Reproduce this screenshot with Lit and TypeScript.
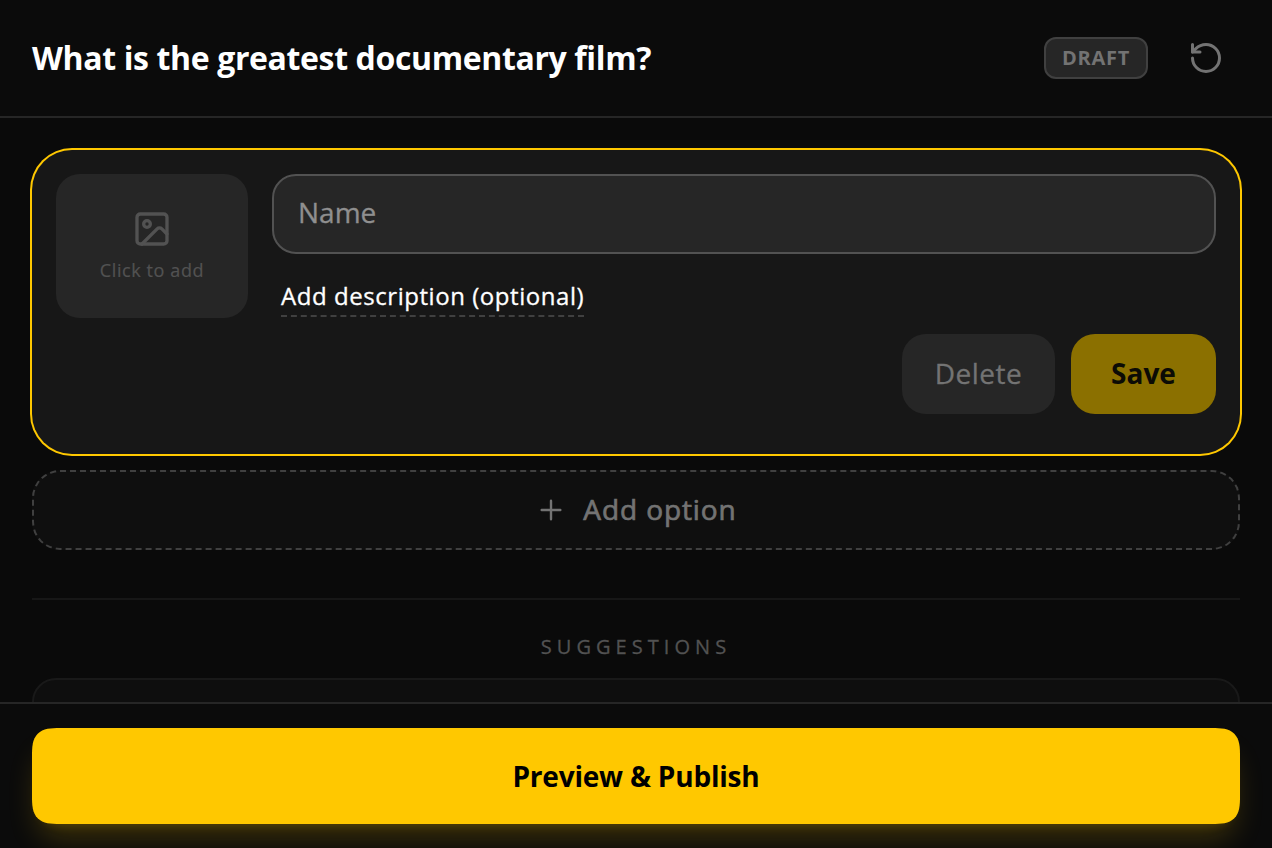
import { LitElement, html, css } from "lit";
import { customElement } from "lit/decorators.js";

@customElement("option-editor")
class OptionEditor extends LitElement {
  static styles = css`
    :host { display: block; }
    * { box-sizing: border-box; }
    .card {
      height: 304px;
      padding: 24px;
      border-radius: 40px;
      background: #171717;
      box-shadow: 0 0 0 2px #ffc800;
      display: flex;
      flex-direction: column;
      gap: 16px;
    }
    .row { display: flex; gap: 24px; height: 144px; }
    .thumb {
      width: 192px;
      height: 144px;
      border-radius: 24px;
      background: #262626;
      color: #525252;
      display: flex;
      flex-direction: column;
      align-items: center;
      padding-top: 35px;
      font-size: 18px;
      line-height: 24px;
    }
    .thumb svg { width: 40px; height: 40px; }
    .thumb span {
      margin-top: 9px;
      letter-spacing: 0.6px;
      white-space: nowrap;
      -webkit-text-stroke: 0.2px currentColor;
    }
    .fields { flex: 1; display: flex; flex-direction: column; align-items: flex-start; }
    .name {
      width: 100%;
      height: 80px;
      border: 2px solid #525252;
      border-radius: 24px;
      background: #262626;
      color: #fff;
      font: inherit;
      font-size: 28px;
      padding: 0 24px 4px;
      outline: none;
    }
    .name::placeholder {
      color: #8f8f8f;
      opacity: 1;
      -webkit-text-stroke: 0.3px currentColor;
    }
    .desc {
      margin: 26px 0 0 9px;
      padding-left: 0;
      height: 37px;
      line-height: 31px;
      font-size: 24px;
      letter-spacing: 0.55px;
      color: #fff;
      border-bottom: 2px dashed #404040;
      white-space: nowrap;
      -webkit-text-stroke: 0.3px currentColor;
    }
    .actions { display: flex; justify-content: flex-end; gap: 16px; }
    button {
      height: 80px;
      border: 0;
      border-radius: 24px;
      font: inherit;
      font-size: 28px;
      padding: 0 0 2px;
    }
    .delete {
      width: 153px;
      background: #262626;
      color: #737373;
      letter-spacing: 0.5px;
      -webkit-text-stroke: 0.3px currentColor;
    }
    .save { width: 145px; background: #8b7000; color: #0c0b05; font-weight: 700; }
  `;

  render() {
    return html`
      <div class="card">
        <div class="row">
          <div class="thumb">
            <svg viewBox="0 0 24 24" fill="none" stroke="currentColor" stroke-width="2" stroke-linecap="round" stroke-linejoin="round">
              <rect x="3" y="3" width="18" height="18" rx="2"></rect>
              <circle cx="9" cy="9" r="2"></circle>
              <path d="m21 15-3.086-3.086a2 2 0 0 0-2.828 0L6 21"></path>
            </svg>
            <span>Click to add</span>
          </div>
          <div class="fields">
            <input class="name" placeholder="Name" />
            <div class="desc">Add description (optional)</div>
          </div>
        </div>
        <div class="actions">
          <button class="delete">Delete</button>
          <button class="save">Save</button>
        </div>
      </div>
    `;
  }
}

@customElement("app-root")
class AppRoot extends LitElement {
  static styles = css`
    :host {
      display: flex;
      flex-direction: column;
      width: 100%;
      height: 848px;
      overflow: hidden;
      background: #0a0a0a;
      color: #fff;
      font-family: "Open Sans", "Noto Sans", sans-serif;
    }
    * { box-sizing: border-box; }
    header {
      flex: none;
      height: 118px;
      padding: 0 48px 0 32px;
      border-bottom: 2px solid #262626;
      background: #0b0b0b;
      display: flex;
      align-items: center;
    }
    h1 {
      flex: 1;
      margin: 0;
      font-size: 32px;
      line-height: 44px;
      font-weight: 700;
      letter-spacing: -0.37px;
      white-space: nowrap;
    }
    .badge {
      width: 104px;
      height: 42px;
      border: 2px solid #404040;
      border-radius: 12px;
      background: #262626;
      color: #737373;
      font-size: 20px;
      line-height: 37px;
      font-weight: 700;
      letter-spacing: 0.7px;
      text-align: center;
      margin-right: 40px;
    }
    .reset { width: 36px; height: 36px; color: #737373; }
    main { flex: 1; min-height: 0; overflow: hidden; padding: 32px 32px 0; }
    .add {
      width: 100%;
      height: 80px;
      margin-top: 16px;
      border: 2px dashed #404040;
      border-radius: 28px;
      background: #0f0f0f;
      color: #737373;
      display: flex;
      align-items: center;
      justify-content: center;
      gap: 16px;
      font: inherit;
      font-size: 28px;
      letter-spacing: 0.9px;
      padding: 0;
    }
    .add svg { width: 32px; height: 32px; }
    .add span { padding-bottom: 2px; -webkit-text-stroke: 0.7px currentColor; }
    .divider { height: 2px; margin-top: 48px; background: #171717; }
    .label {
      margin-top: 32px;
      height: 30px;
      line-height: 30px;
      font-size: 20px;
      letter-spacing: 5.05px;
      color: #525252;
      text-align: center;
      -webkit-text-stroke: 0.3px currentColor;
    }
    .suggestion {
      height: 120px;
      margin-top: 16px;
      border: 2px solid #191919;
      border-radius: 24px;
      background: #0e0e0e;
    }
    footer {
      flex: none;
      height: 146px;
      overflow: hidden;
      border-top: 2px solid #262626;
      background: #0b0b0b;
      padding: 24px 32px 0;
    }
    .publish {
      width: 100%;
      height: 96px;
      border: 0;
      border-radius: 28px;
      corner-shape: superellipse(1.6);
      background: #ffc800;
      color: #000;
      font: inherit;
      font-size: 28px;
      font-weight: 700;
      letter-spacing: -0.2px;
      box-shadow: 0 20px 30px -6px rgba(255, 200, 0, 0.2), 0 8px 12px -8px rgba(255, 200, 0, 0.2);
    }
  `;

  render() {
    return html`
      <header>
        <h1>What is the greatest documentary film?</h1>
        <div class="badge">DRAFT</div>
        <svg class="reset" viewBox="0 0 24 24" fill="none" stroke="currentColor" stroke-width="2" stroke-linecap="round" stroke-linejoin="round">
          <path d="M3 12a9 9 0 1 0 9-9 9.75 9.75 0 0 0-6.74 2.74L3 8"></path>
          <path d="M3 3v5h5"></path>
        </svg>
      </header>
      <main>
        <option-editor></option-editor>
        <button class="add">
          <svg viewBox="0 0 24 24" fill="none" stroke="currentColor" stroke-width="1.8" stroke-linecap="round">
            <path d="M5 12h14M12 5v14"></path>
          </svg>
          <span>Add option</span>
        </button>
        <div class="divider"></div>
        <div class="label">SUGGESTIONS</div>
        <div class="suggestion"></div>
      </main>
      <footer>
        <button class="publish">Preview &amp; Publish</button>
      </footer>
    `;
  }
}
